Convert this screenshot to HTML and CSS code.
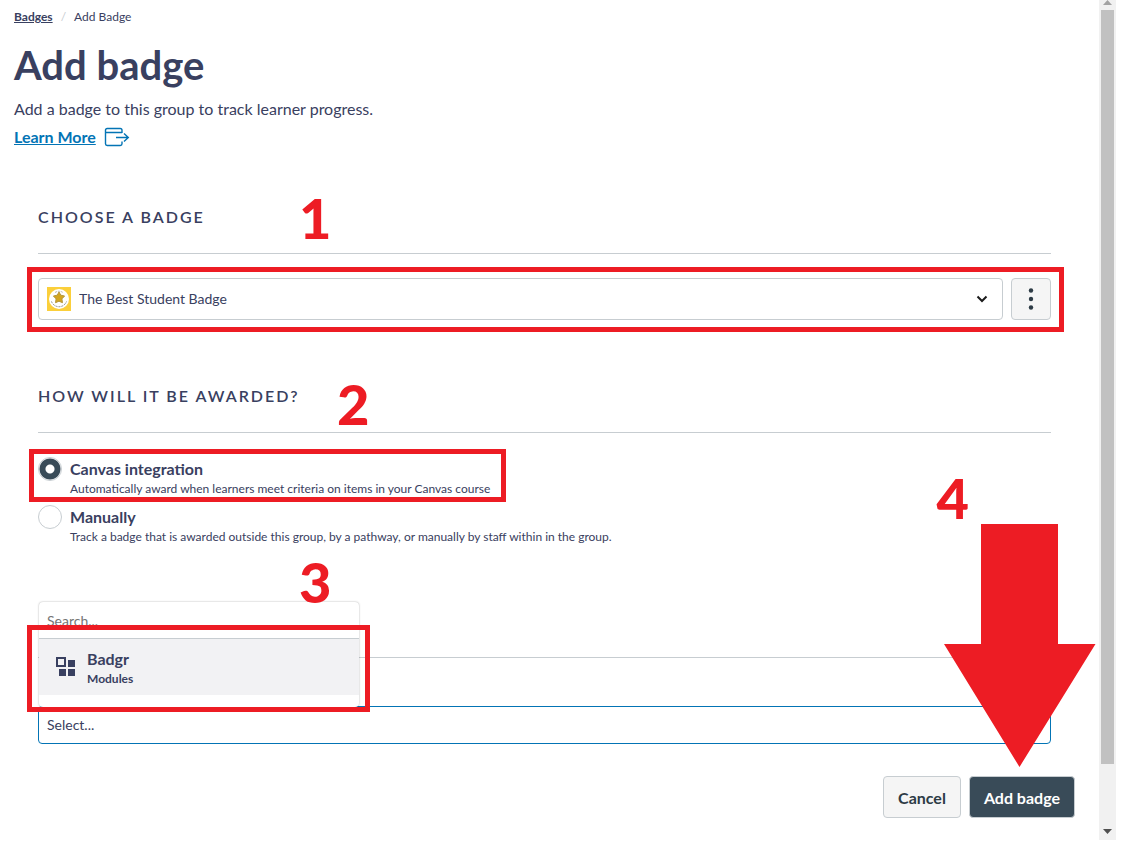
FILE: index.html
```html
<!DOCTYPE html>
<html lang="en">

<head>
    <meta charset="UTF-8">
    <meta name="viewport" content="width=device-width, initial-scale=1.0">
    <title>Add badge</title>
    <link rel="stylesheet" href="styles.css">
</head>

<body>
    <div class="window">
        <main class="page">
            <nav class="breadcrumb">
                <a href="#">Badges</a>
                <span class="slash">/</span>
                <span>Add Badge</span>
            </nav>
            <h1>Add badge</h1>
            <p class="intro">Add a badge to this group to track learner progress.</p>
            <a class="learn-more" href="#">
                <span>Learn More</span>
                <svg width="26" height="20" viewBox="0 0 26 20" fill="none" stroke="currentColor" stroke-width="1.4">
                    <path d="M18 6V3.2Q18 1.500 16.300 1.500H3.200Q1.500 1.500 1.500 3.200V16.800Q1.500 18.500 3.200 18.500H16.300Q18 18.500 18 16.800V14.500M1.500 5.500H18M12 10.500H24M20 6.500L24.300 10.500L20 14.500" />
                </svg>
            </a>

            <form>
                <section class="section">
                    <h2>CHOOSE A BADGE</h2>
                    <span class="step step-1">1</span>
                    <div class="badge-row">
                        <div class="badge-select">
                            <svg width="24" height="24" viewBox="0 0 24 24">
                                <rect width="24" height="24" fill="#fbcf3b" />
                                <circle cx="12" cy="12" r="10" fill="#fff" />
                                <path d="M4.500 14.500A8 8 0 0 0 19.500 14.500" fill="none" stroke="#8b8b83" stroke-dasharray="2 1" />
                                <path d="M8 5.500Q12 3 16 5.500" fill="none" stroke="#b9b7a8" stroke-dasharray="2 1" />
                                <path d="M12 5L13.800 8.200L17.600 9L14.900 11.900L15.500 15.700L12 14.200L8.500 15.700L9.100 11.900L6.400 9L10.200 8.200Z" fill="#d3a51f" stroke="#b5973c" />
                            </svg>
                            <select aria-label="Badge">
                                <option>The Best Student Badge</option>
                            </select>
                            <svg width="12" height="8" viewBox="0 0 12 8" fill="none" stroke="#1b1b1b" stroke-width="2">
                                <path d="M1.500 1.500L6 6L10.500 1.500" />
                            </svg>
                        </div>
                        <button type="button" class="btn more" aria-label="More options">
                            <svg width="6" height="22" viewBox="0 0 6 22" fill="#2d3b45">
                                <circle cx="3" cy="2.500" r="2.200" />
                                <circle cx="3" cy="11" r="2.200" />
                                <circle cx="3" cy="19.500" r="2.200" />
                            </svg>
                        </button>
                        <div class="mark mark-badge"></div>
                    </div>
                </section>

                <section class="section">
                    <h2>HOW WILL IT BE AWARDED?</h2>
                    <span class="step step-2">2</span>
                    <div class="options">
                        <label class="option">
                            <input type="radio" name="award" checked>
                            <span>
                                <strong>Canvas integration</strong>
                                <small>Automatically award when learners meet criteria on items in your Canvas course</small>
                            </span>
                            <span class="mark mark-option"></span>
                        </label>
                        <label class="option">
                            <input type="radio" name="award">
                            <span>
                                <strong>Manually</strong>
                                <small>Track a badge that is awarded outside this group, by a pathway, or manually by staff within in the group.</small>
                            </span>
                        </label>
                    </div>
                </section>

                <section class="section">
                    <h2></h2>
                    <button type="button" class="content-select">Select...</button>
                    <div class="menu">
                        <input type="text" placeholder="Search..." aria-label="Search">
                        <button type="button" class="menu-item">
                            <svg width="20" height="20" viewBox="-1 0 20 20" fill="#394060">
                                <path d="M0 0H10V10H0ZM2 2V8H8V2Z" fill-rule="evenodd" />
                                <path d="M12 3H19V10H12ZM3 12H10V19H3ZM12 12H19V19H12Z" />
                            </svg>
                            <span>
                                <strong>Badgr</strong>
                                <small>Modules</small>
                            </span>
                        </button>
                        <div class="mark mark-menu"></div>
                    </div>
                    <span class="step step-3">3</span>
                </section>

                <div class="actions">
                    <button type="button" class="btn">Cancel</button>
                    <button type="submit" class="btn primary">Add badge</button>
                    <span class="step step-4">4</span>
                    <svg class="arrow" width="152" height="243" viewBox="0 0 152 243" fill="#ed1c24">
                        <path d="M37 0H114V120H151.500L75.500 243L0 120H37Z" />
                    </svg>
                </div>
            </form>
        </main>

        <div class="scrollbar">
            <svg width="9" height="5" viewBox="0 0 9 5" fill="#a3a3a3"><path d="M0 5L4.500 0L9 5Z" /></svg>
            <div class="thumb"></div>
            <svg width="9" height="5" viewBox="0 0 9 5" fill="#505050"><path d="M0 0L4.500 5L9 0Z" /></svg>
        </div>
    </div>
</body>

</html>
```
FILE: styles.css
```css
* {
    box-sizing: border-box;
}

body {
    margin: 0;
    background-color: #fff;
    color: #394060;
    font-family: Lato, "Open Sans", sans-serif;
    font-size: 16px;
    line-height: 24px;
}

button,
input,
select {
    font-family: inherit;
    color: inherit;
}

.window {
    display: flex;
    padding-right: 10px;
}

.page {
    flex: 1;
    padding-top: 8px;
    padding-bottom: 22px;
}

/* Page header */
.breadcrumb,
h1,
.intro,
.learn-more {
    margin: 0 14px;
}

.breadcrumb {
    display: flex;
    gap: 8px;
    font-size: 12px;
    line-height: 18px;
}

.breadcrumb a {
    color: inherit;
    font-weight: 700;
}

.slash {
    color: #c7cdd1;
}

h1 {
    margin-top: 15px;
    font-size: 40px;
    line-height: 48px;
    font-weight: 700;
}

.intro {
    margin-top: 8px;
}

.learn-more {
    display: flex;
    align-items: center;
    gap: 8px;
    margin-top: 4px;
    width: fit-content;
    color: #0374b5;
    font-weight: 700;
}

/* Form sections */
.section {
    position: relative;
    margin: 57px 48px 0 38px;
}

.section + .section {
    margin-top: 65px;
}

h2 {
    margin: 0 0 24px;
    height: 48px;
    border-bottom: 1px solid #c7cdd1;
    font-size: 16px;
    line-height: 22px;
    font-weight: 600;
    letter-spacing: 2px;
}

.badge-row {
    position: relative;
    display: flex;
    gap: 8px;
}

.badge-select {
    flex: 1;
    display: flex;
    align-items: center;
    gap: 8px;
    height: 42px;
    padding: 0 14px 0 8px;
    border: 1px solid #c7cdd1;
    border-radius: 4px;
}

.badge-select select {
    flex: 1;
    height: 40px;
    padding: 0 0 2px;
    border: 0;
    background: none;
    appearance: none;
    font-size: 14px;
}

.btn {
    height: 42px;
    padding: 0 14px;
    border: 1px solid #c7cdd1;
    border-radius: 4px;
    background-color: #f5f5f5;
    color: #2d3b45;
    font-size: 16px;
    font-weight: 700;
}

.more {
    display: flex;
    align-items: center;
    justify-content: center;
    width: 40px;
    padding: 0;
}

.primary {
    background-color: #394b58;
    color: #fff;
}

.options {
    display: flex;
    flex-direction: column;
    align-items: flex-start;
    gap: 8px;
}

.option {
    position: relative;
    display: flex;
    gap: 8px;
}

.option input {
    width: 24px;
    height: 24px;
    margin: 0;
    border: 1px solid #c7cdd1;
    border-radius: 50%;
    appearance: none;
}

.option input:checked {
    background: radial-gradient(circle, #fff 4px, #394b58 5px, #394b58 10px, #fff 11px);
}

strong,
small {
    display: block;
}

strong {
    font-weight: 700;
}

small {
    font-size: 12px;
    line-height: 16px;
}

/* Content picker with its open menu */
.content-select {
    display: block;
    width: 100%;
    height: 38px;
    margin-top: 48px;
    padding: 0 8px 2px;
    border: 1px solid #0374b5;
    border-radius: 4px;
    background: none;
    font-size: 14px;
    text-align: left;
}

.menu {
    position: absolute;
    left: 1px;
    bottom: 37px;
    width: 320px;
    padding-bottom: 12px;
    border-radius: 4px;
    background-color: #fff;
    box-shadow: 0 0 2px rgba(0, 0, 0, .35);
}

.menu input {
    display: block;
    width: 100%;
    height: 37px;
    padding: 0 8px;
    border: 0;
    border-bottom: 1px solid #c7cdd1;
    background: none;
    font-size: 14px;
}

.menu-item {
    display: flex;
    align-items: center;
    gap: 12px;
    width: 100%;
    height: 56px;
    padding: 0 16px;
    border: 0;
    background-color: #f2f2f4;
    font-size: 16px;
    line-height: 24px;
    text-align: left;
}

.menu-item small {
    font-weight: 700;
}

.actions {
    position: relative;
    display: flex;
    justify-content: flex-end;
    gap: 8px;
    margin-top: 32px;
    padding-right: 24px;
}

/* Red step markers */
.mark {
    position: absolute;
    border: 5px solid #ed1c24;
    pointer-events: none;
}

.mark-badge {
    inset: -11px -13px -12px -11px;
}

.mark-option {
    inset: -8px -16px -5px -9px;
}

.mark-menu {
    inset: 23px -11px -5px -12px;
}

.step {
    position: absolute;
    color: #ed1c24;
    font-size: 56px;
    line-height: 56px;
    font-weight: 900;
}

.step-1 {
    left: 261px;
    top: -16px;
}

.step-2 {
    left: 299px;
    top: -9px;
}

.step-3 {
    left: 261px;
    top: -56px;
}

.step-4 {
    right: 130px;
    bottom: 292px;
}

.arrow {
    position: absolute;
    right: 3px;
    bottom: 51px;
    pointer-events: none;
}

/* Scrollbar */
.scrollbar {
    display: flex;
    flex-direction: column;
    align-items: center;
    width: 17px;
    padding-bottom: 6px;
    background-color: #f1f1f1;
}

.thumb {
    flex: 1;
    width: 13px;
    margin: 5px 0 65px;
    background-color: #c1c1c1;
}
```
